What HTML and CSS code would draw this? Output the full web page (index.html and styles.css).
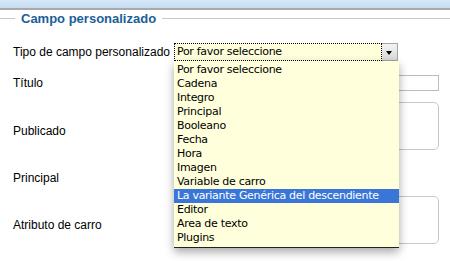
FILE: index.html
```html
<!DOCTYPE html>
<html lang="es">
<head>
    <meta charset="UTF-8">
    <title>Campo personalizado</title>
    <link rel="stylesheet" href="styles.css">
</head>
<body>
    <div class="topbar"></div>

    <div class="panel">
        <div class="legend">
            <span class="legend-line short"></span>
            <span class="legend-text">Campo personalizado</span>
            <span class="legend-line"></span>
        </div>

        <div class="row row-type">
            <label>Tipo de campo personalizado</label>
            <div class="select">
                <span class="select-value">Por favor seleccione</span>
                <span class="select-arrow"></span>
            </div>
        </div>

        <div class="row row-title">
            <label>Título</label>
            <div class="field"><div class="input"></div></div>
        </div>

        <div class="row row-area">
            <label>Publicado</label>
            <div class="field"><div class="textarea"></div></div>
        </div>

        <div class="row row-plain">
            <label>Principal</label>
            <div class="field"></div>
        </div>

        <div class="row row-area">
            <label>Atributo de carro</label>
            <div class="field"><div class="textarea"></div></div>
        </div>

        <!-- open list of the select -->
        <ul class="dropdown">
            <li>Por favor seleccione</li>
            <li>Cadena</li>
            <li>Integro</li>
            <li>Principal</li>
            <li>Booleano</li>
            <li>Fecha</li>
            <li>Hora</li>
            <li>Imagen</li>
            <li>Variable de carro</li>
            <li class="active">La variante Genérica del descendiente</li>
            <li>Editor</li>
            <li>Area de texto</li>
            <li>Plugins</li>
        </ul>
    </div>
</body>
</html>
```

FILE: styles.css
```css
body {
    margin: 0;
    font-family: "Liberation Sans", Arial, sans-serif;
    font-size: 12px;
    color: #000;
    background: #fff;
    width: 450px;
    height: 261px;
    overflow: hidden;
}

.topbar {
    height: 8px;
    background: linear-gradient(#d6e7f8, #c4dcf3);
    border-bottom: 2px solid #a9a9a9;
}

.panel {
    position: relative;
}

/* Legend */
.legend {
    display: flex;
    align-items: center;
    height: 16px;
}

.legend-line {
    flex: 1;
    border-top: 1px solid #c8c8c8;
}

.legend-line.short {
    flex: 0 0 15px;
}

.legend-text {
    padding: 0 6px;
    font-weight: bold;
    font-size: 13px;
    color: #1b5e97;
}

/* Rows */
.row {
    display: grid;
    grid-template-columns: 161px 1fr;
    align-items: center;
    padding-left: 13px;
}

.row-type {
    margin-top: 17px;
    height: 18px;
}

.row-title {
    margin-top: 14px;
    height: 16px;
}

.row-area {
    margin-top: 11px;
    height: 48px;
}

.row-area label {
    padding-top: 10px;
}

.row-plain {
    margin-top: 14px;
    height: 28px;
}

.row-plain + .row-area {
    margin-top: 4px;
}

.field {
    display: flex;
    justify-content: flex-end;
    padding-right: 11px;
}

.input {
    width: 100px;
    height: 14px;
    border: 1px solid #bcbcbc;
}

.textarea {
    width: 100px;
    height: 46px;
    border: 1px solid #c8c8c8;
    border-radius: 5px;
}

/* Select */
.select {
    display: flex;
    width: 224px;
    height: 18px;
    background: #ffffdc;
}

.select-value {
    flex: 1;
    border: 1px dotted #000;
    padding-left: 2px;
    font-family: "DejaVu Sans", sans-serif;
    font-size: 11px;
    letter-spacing: -0.3px;
    line-height: 16px;
}

.select-arrow {
    width: 15px;
    position: relative;
    background: linear-gradient(#f4f4f4, #d9d9d9);
    border: 1px solid #a5a5a5;
    border-left: none;
}

.select-arrow::after {
    content: "";
    position: absolute;
    left: 4px;
    top: 7px;
    border-left: 3.5px solid transparent;
    border-right: 3.5px solid transparent;
    border-top: 4px solid #000;
}

/* Dropdown list */
.dropdown {
    position: absolute;
    left: 174px;
    top: 51px;
    width: 225px;
    margin: 0;
    padding: 2px 0 2px;
    list-style: none;
    background: #ffffdc;
    border-bottom: 1px solid #222;
    box-shadow: 0 4px 9px rgba(0, 0, 0, 0.35);
    font-family: "DejaVu Sans", sans-serif;
    font-size: 11px;
    letter-spacing: -0.3px;
}

.dropdown li {
    height: 14px;
    line-height: 14px;
    padding-left: 3px;
    white-space: nowrap;
}

.dropdown li.active {
    background: #3a76d8;
    color: #fff;
}
```
